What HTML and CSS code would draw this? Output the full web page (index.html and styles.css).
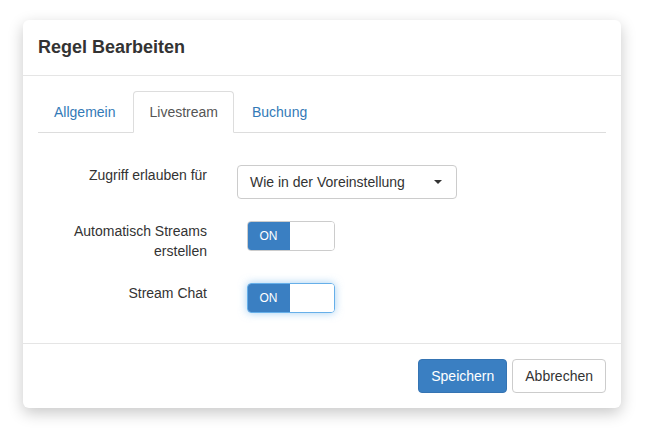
FILE: index.html
```html
<!DOCTYPE html>
<html lang="de">
  <head>
    <meta charset="UTF-8" />
    <meta name="viewport" content="width=device-width, initial-scale=1.0" />
    <title>Regel Bearbeiten</title>
    <link rel="stylesheet" href="styles.css">
  </head>
  <body>
    <div class="modal">
      <div class="modal-header">
        <h4 class="modal-title">Regel Bearbeiten</h4>
      </div>

      <div class="modal-body">
        <ul class="nav-tabs">
          <li><a href="#">Allgemein</a></li>
          <li class="active"><a href="#">Livestream</a></li>
          <li><a href="#">Buchung</a></li>
        </ul>

        <div class="form">
          <label class="control-label">Zugriff erlauben für</label>
          <div class="select">
            <span>Wie in der Voreinstellung</span>
            <svg class="caret" width="8" height="4" viewBox="0 0 8 4"><path d="M0 0h8L4 4z" fill="#333"/></svg>
          </div>

          <label class="control-label">Automatisch Streams erstellen</label>
          <div class="switch">
            <span class="switch-on">ON</span>
            <span class="switch-off"></span>
          </div>

          <label class="control-label">Stream Chat</label>
          <div class="switch focus">
            <span class="switch-on">ON</span>
            <span class="switch-off"></span>
          </div>
        </div>
      </div>

      <div class="modal-footer">
        <button class="btn btn-primary">Speichern</button>
        <button class="btn btn-default">Abbrechen</button>
      </div>
    </div>
  </body>
</html>
```

FILE: styles.css
```css
body {
  font-family: "Liberation Sans", Arial, sans-serif;
  font-size: 14px;
  line-height: 20px;
  color: #333;
  background-color: #fff;
  margin: 0;
  padding: 20px 23px;
}

.modal {
  width: 598px;
  background-color: #fff;
  border-radius: 6px;
  box-shadow: 0 5px 15px rgba(0, 0, 0, 0.22);
}

.modal-header {
  padding: 15px;
  border-bottom: 1px solid #e5e5e5;
}

.modal-title {
  margin: 0;
  font-size: 18px;
  line-height: 25px;
  font-weight: bold;
  color: #333;
}

.modal-body {
  padding: 15px 15px 30px;
}

.nav-tabs {
  display: flex;
  list-style: none;
  margin: 0;
  padding: 0;
  border-bottom: 1px solid #ddd;
}

.nav-tabs li {
  margin-bottom: -1px;
  margin-right: 2px;
}

.nav-tabs a {
  display: block;
  padding: 10px 15px;
  border: 1px solid transparent;
  border-radius: 4px 4px 0 0;
  color: #337ab7;
  text-decoration: none;
}

.nav-tabs .active a {
  color: #555;
  background-color: #fff;
  border-color: #ddd #ddd transparent;
}

.form {
  display: grid;
  grid-template-columns: 169px 1fr;
  column-gap: 30px;
  row-gap: 22px;
  padding-top: 32px;
  align-items: start;
}

.control-label {
  text-align: right;
}

.select {
  display: flex;
  align-items: center;
  justify-content: space-between;
  box-sizing: border-box;
  width: 220px;
  height: 34px;
  padding: 6px 14px 6px 12px;
  border: 1px solid #ccc;
  border-radius: 4px;
  color: #333;
}

.switch {
  display: flex;
  box-sizing: border-box;
  width: 88px;
  height: 30px;
  margin-left: 10px;
  border: 1px solid #ccc;
  border-radius: 4px;
  overflow: hidden;
}

.switch-on {
  width: 43px;
  margin: -1px 0 -1px -1px;
  background-color: #3a7fc2;
  color: #fff;
  font-size: 12px;
  line-height: 30px;
  text-align: center;
}

.switch-off {
  flex: 1;
  background-color: #fff;
}

.switch.focus {
  border-color: #66afe9;
  box-shadow: 0 0 8px rgba(102, 175, 233, 0.6);
}

.modal-footer {
  display: flex;
  justify-content: flex-end;
  gap: 5px;
  padding: 15px;
  border-top: 1px solid #e5e5e5;
}

.btn {
  font-family: inherit;
  font-size: 14px;
  line-height: 20px;
  padding: 6px 12px;
  border: 1px solid transparent;
  border-radius: 4px;
  cursor: pointer;
}

.btn-primary {
  color: #fff;
  background-color: #3a7fc2;
  border-color: #3574b3;
}

.btn-default {
  color: #333;
  background-color: #fff;
  border-color: #ccc;
}
```
